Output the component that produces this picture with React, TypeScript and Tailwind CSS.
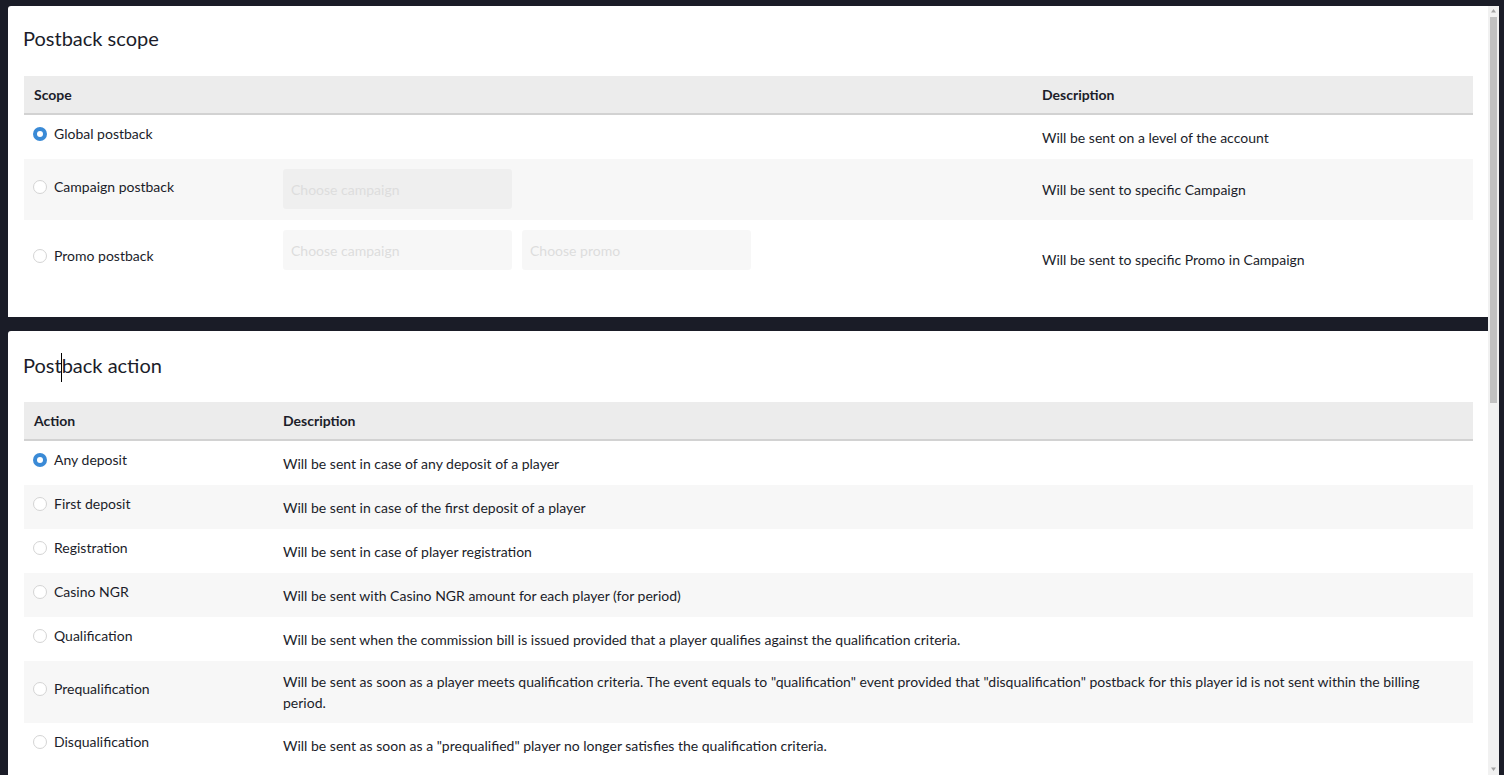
import React, { useState } from "react";

const scopes = [
  { id: "global", label: "Global postback", desc: "Will be sent on a level of the account", inputs: [] as string[] },
  { id: "campaign", label: "Campaign postback", desc: "Will be sent to specific Campaign", inputs: ["Choose campaign"] },
  { id: "promo", label: "Promo postback", desc: "Will be sent to specific Promo in Campaign", inputs: ["Choose campaign", "Choose promo"] },
];

const actions = [
  { id: "any", label: "Any deposit", desc: "Will be sent in case of any deposit of a player" },
  { id: "first", label: "First deposit", desc: "Will be sent in case of the first deposit of a player" },
  { id: "reg", label: "Registration", desc: "Will be sent in case of player registration" },
  { id: "ngr", label: "Casino NGR", desc: "Will be sent with Casino NGR amount for each player (for period)" },
  { id: "qual", label: "Qualification", desc: "Will be sent when the commission bill is issued provided that a player qualifies against the qualification criteria." },
  {
    id: "prequal",
    label: "Prequalification",
    desc: 'Will be sent as soon as a player meets qualification criteria. The event equals to "qualification" event provided that "disqualification" postback for this player id is not sent within the billing period.',
  },
  { id: "disqual", label: "Disqualification", desc: 'Will be sent as soon as a "prequalified" player no longer satisfies the qualification criteria.' },
];

function Radio({ checked, label, onClick }: { checked: boolean; label: string; onClick: () => void }) {
  return (
    <label className="flex items-center gap-[7px] cursor-pointer leading-[24px]" onClick={onClick}>
      {checked ? (
        <span className="w-[14px] h-[14px] rounded-full bg-[#3a8ad6] flex items-center justify-center shrink-0">
          <span className="w-[6px] h-[6px] rounded-full bg-white" />
        </span>
      ) : (
        <span className="w-[14px] h-[14px] rounded-full border border-[#d4d4d4] bg-white shrink-0" />
      )}
      <span>{label}</span>
    </label>
  );
}

export default function App() {
  const [scope, setScope] = useState("global");
  const [action, setAction] = useState("any");

  return (
    <div className="h-screen bg-[#1a1c27] pl-[8px] pt-[6px] flex font-['Lato',sans-serif] text-[#1b1d2a] text-[14px]">
      <div className="w-[1480px] h-full overflow-hidden">
        {/* Postback scope */}
        <div className="bg-white rounded-tl-[3px] pl-[16px] pr-[15px] pt-[19px] pb-[19px]">
          <h2 className="text-[20px] leading-[26px] mb-[25px] -ml-px">Postback scope</h2>
          <table className="w-full border-collapse">
            <thead>
              <tr className="bg-[#ececec] border-b-2 border-[#d2d2d2] font-bold">
                <th className="text-left w-[249px] px-[10px] h-[38px]">Scope</th>
                <th className="text-left w-[759px]"></th>
                <th className="text-left px-[10px]">Description</th>
              </tr>
            </thead>
            <tbody>
              {scopes.map((s, i) => (
                <tr key={s.id} className={i % 2 === 1 ? "bg-[#f7f7f7]" : "bg-white"}>
                  <td className="pl-[9px] pr-[10px] pt-[7px] pb-[13px] align-middle">
                    <Radio checked={scope === s.id} label={s.label} onClick={() => setScope(s.id)} />
                  </td>
                  <td className={`px-[10px] pt-[10px] align-top ${i === 2 ? "pb-[28px]" : "pb-[11px]"}`}>
                    <div className="flex gap-[10px]">
                      {s.inputs.map((p) => (
                        <input
                          key={p}
                          placeholder={p}
                          disabled
                          className="w-[229px] h-[40px] rounded-[3px] bg-black/[0.03] px-[8px] outline-none placeholder:text-[#dddddd]"
                        />
                      ))}
                    </div>
                  </td>
                  <td className="px-[10px] py-[10px] align-middle leading-[21px]">{s.desc}</td>
                </tr>
              ))}
            </tbody>
          </table>
        </div>

        {/* Postback action */}
        <div className="bg-white rounded-tl-[3px] pl-[16px] pr-[15px] pt-[21px] pb-[720px] mt-[14px]">
          <h2 className="text-[20px] leading-[26px] h-[26px] mb-[24px] -ml-px">
            Post
            <span className="inline-block w-px h-[29px] bg-black align-middle -mx-[0.5px]" />
            back action
          </h2>
          <table className="w-full border-collapse">
            <thead>
              <tr className="bg-[#ececec] border-b-2 border-[#d2d2d2] font-bold">
                <th className="text-left w-[249px] px-[10px] h-[38px]">Action</th>
                <th className="text-left px-[10px]">Description</th>
              </tr>
            </thead>
            <tbody>
              {actions.map((a, i) => (
                <tr key={a.id} className={i % 2 === 1 ? "bg-[#f7f7f7]" : "bg-white"}>
                  <td className="pl-[9px] pr-[10px] pt-[7px] pb-[13px] align-middle">
                    <Radio checked={action === a.id} label={a.label} onClick={() => setAction(a.id)} />
                  </td>
                  <td className="px-[10px] py-[10px] align-middle leading-[21px]">{a.desc}</td>
                </tr>
              ))}
            </tbody>
          </table>
        </div>
      </div>

      {/* scrollbar */}
      <div className="w-[11px] h-full bg-[#f1f1f1] flex flex-col items-center">
        <svg width="7" height="11" viewBox="0 0 7 11" className="shrink-0">
          <path d="M3.5 3 L6 6.5 L1 6.5 Z" fill="#a3a3a3" />
        </svg>
        <div className="w-[7px] h-[386px] bg-[#c1c1c1]" />
        <div className="flex-1" />
        <svg width="7" height="11" viewBox="0 0 7 11" className="shrink-0">
          <path d="M1 3.5 L6 3.5 L3.5 7 Z" fill="#a3a3a3" />
        </svg>
      </div>
    </div>
  );
}
